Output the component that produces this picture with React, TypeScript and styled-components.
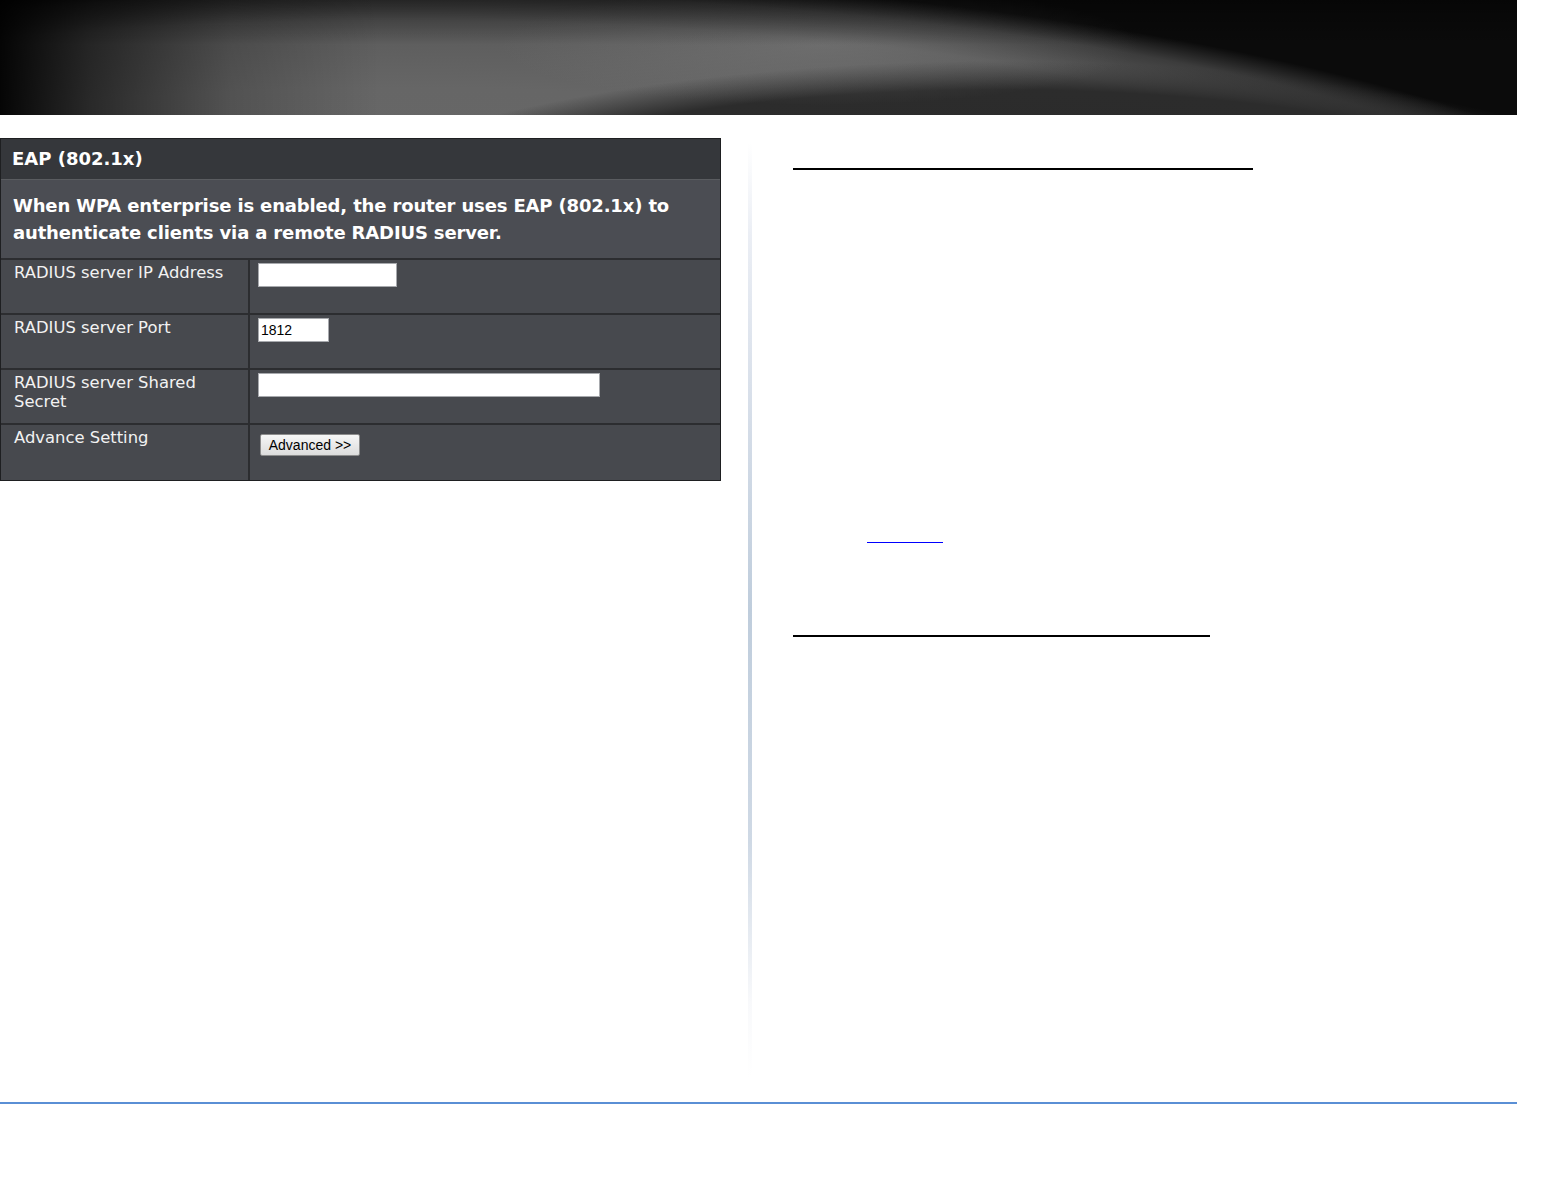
import styled, { createGlobalStyle } from 'styled-components';

const GlobalStyle = createGlobalStyle`
  html, body {
    margin: 0;
    padding: 0;
    background: #ffffff;
  }
  body {
    font-family: "DejaVu Sans", Verdana, sans-serif;
  }
`;

const rows = [
  { label: 'RADIUS server IP Address', kind: 'input', width: 139, value: '' },
  { label: 'RADIUS server Port', kind: 'input', width: 71, value: '1812' },
  { label: 'RADIUS server Shared Secret', kind: 'input', width: 342, value: '' },
  { label: 'Advance Setting', kind: 'button', width: 0, value: '' },
];

const App = () => {
  return (
    <Page>
      <GlobalStyle />
      <Banner />
      <Main>
        <LeftCol>
          <Panel>
            <PanelTitle>EAP (802.1x)</PanelTitle>
            <PanelNote>
              When WPA enterprise is enabled, the router uses EAP (802.1x) to
              <br />
              authenticate clients via a remote RADIUS server.
            </PanelNote>
            {rows.map((r) => (
              <Row key={r.label}>
                <Label>{r.label}</Label>
                <Field>
                  {r.kind === 'input' ? (
                    <TextBox $width={r.width} defaultValue={r.value} />
                  ) : (
                    <AdvButton type="button">Advanced &gt;&gt;</AdvButton>
                  )}
                </Field>
              </Row>
            ))}
          </Panel>
        </LeftCol>
        <Divider />
        <RightCol>
          <Heading $width={460} />
          <LinkLine href="#" />
          <Heading $width={417} $top={92} />
        </RightCol>
      </Main>
      <Footer />
    </Page>
  );
};

export default App;

const Page = styled.div`
  width: 1543px;
  min-height: 1195px;
`;

// swoosh banner: grey arc over black, darker inner curve at the bottom
const Banner = styled.div`
  width: 1517px;
  height: 115px;
  background:
    linear-gradient(90deg, rgba(0, 0, 0, 0.95) 0%, rgba(0, 0, 0, 0.6) 90px, rgba(0, 0, 0, 0.2) 230px, rgba(0, 0, 0, 0) 380px),
    linear-gradient(180deg, rgba(0, 0, 0, 0.45) 0%, rgba(0, 0, 0, 0) 45px),
    radial-gradient(ellipse 320px 60px at 820px 45px, rgba(150, 150, 150, 0.3) 0%, rgba(150, 150, 150, 0) 100%),
    radial-gradient(ellipse 800px 239px at 1000px 300px, #282828 0%, #2c2c2c 88%, rgba(50, 50, 50, 0) 100%),
    radial-gradient(ellipse 1385px 375px at 400px 350px, #6a6a6a 0%, #666666 70%, #5a5a5a 88%, #3c3c3c 95%, rgba(10, 10, 10, 0) 100%),
    #0b0b0b;
`;

const Main = styled.div`
  display: flex;
  align-items: flex-start;
  height: 964px;
  padding-top: 23px;
`;

const LeftCol = styled.div`
  width: 721px;
  flex-shrink: 0;
`;

const Panel = styled.div`
  border: 1px solid #1e1f21;
  background: #47494e;
  color: #ffffff;
`;

const PanelTitle = styled.div`
  height: 41px;
  box-sizing: border-box;
  padding: 9px 11px 0;
  background: #35373b;
  border-bottom: 1px solid #5a5c60;
  font-size: 18px;
  font-weight: bold;
`;

const PanelNote = styled.div`
  height: 80px;
  box-sizing: border-box;
  padding: 12px 12px 0;
  background: #4b4d53;
  border-bottom: 2px solid #2c2d30;
  font-size: 18px;
  line-height: 27px;
  font-weight: bold;
  letter-spacing: -0.15px;
`;

const Row = styled.div`
  display: grid;
  grid-template-columns: 249px 1fr;
  box-sizing: border-box;
  height: 55px;
  border-bottom: 2px solid #2c2d30;

  &:last-child {
    border-bottom: none;
  }
`;

const Label = styled.div`
  padding: 3px 12px 0 13px;
  border-right: 2px solid #2c2d30;
  font-size: 16.4px;
  line-height: 19px;
  color: #f2f2f2;
`;

const Field = styled.div`
  padding: 3px 8px 0;
`;

const TextBox = styled.input<{ $width: number }>`
  width: ${(p) => p.$width}px;
  height: 24px;
  box-sizing: border-box;
  border: 1px solid #a7a9ad;
  background: #ffffff;
  padding: 0 2px;
  font-family: "Liberation Sans", Arial, sans-serif;
  font-size: 14px;
  color: #000000;
  outline: none;
`;

const AdvButton = styled.button`
  margin: 6px 0 0 2px;
  width: 100px;
  height: 22px;
  border: 1px solid #8c8c8c;
  border-radius: 2px;
  background: linear-gradient(#f6f6f6, #dcdcdc);
  font-family: "Liberation Sans", Arial, sans-serif;
  font-size: 14px;
  color: #000000;
  padding: 0;
`;

const Divider = styled.div`
  width: 4px;
  height: 935px;
  margin: 4px 0 0 27px;
  flex-shrink: 0;
  background: linear-gradient(
    180deg,
    rgba(235, 238, 245, 0) 0%,
    rgba(230, 234, 242, 0.8) 10%,
    #d5dde8 30%,
    #bfcddc 50%,
    #cfd9e5 75%,
    rgba(238, 240, 245, 0.4) 92%,
    rgba(255, 255, 255, 0) 100%
  );
`;

const RightCol = styled.div`
  display: flex;
  flex-direction: column;
  align-items: flex-start;
  margin-left: 41px;
`;

const Heading = styled.div<{ $width: number; $top?: number }>`
  width: ${(p) => p.$width}px;
  height: 2px;
  margin-top: ${(p) => p.$top ?? 30}px;
  background: #000000;
`;

const LinkLine = styled.a`
  display: block;
  width: 76px;
  height: 1px;
  margin: 372px 0 0 74px;
  background: #0000ff;
`;

const Footer = styled.div`
  width: 1517px;
  height: 2px;
  background: #5a8fd5;
`;
